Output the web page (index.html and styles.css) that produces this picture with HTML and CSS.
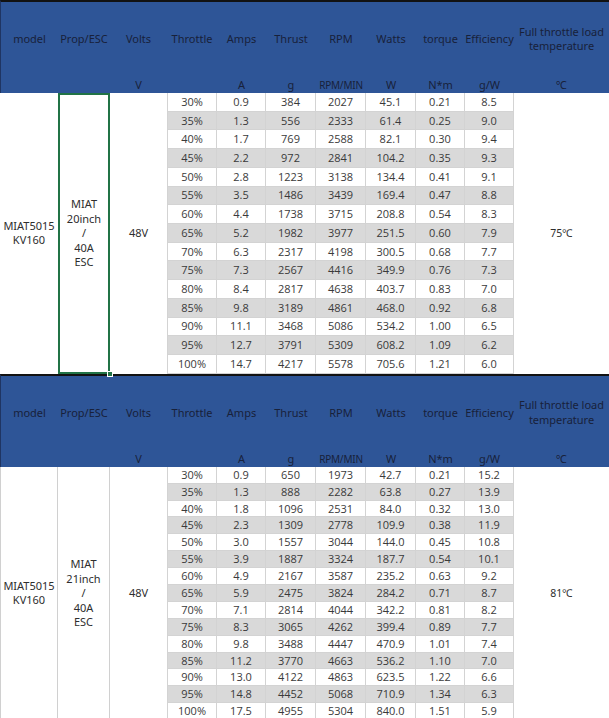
FILE: index.html
```html
<!DOCTYPE html>
<html>
<head>
<meta charset="utf-8">
<link rel="stylesheet" href="styles.css">
</head>
<body>
<div class="sheet">
<table class="perf t1">
  <colgroup>
    <col class="c-model"><col class="c-prop"><col class="c-volts"><col class="c-thr"><col class="c-amps"><col class="c-thrust"><col class="c-rpm"><col class="c-watts"><col class="c-torque"><col class="c-eff"><col class="c-temp">
  </colgroup>
  <thead>
    <tr class="labels">
      <th class="edge">model</th><th>Prop/ESC</th><th>Volts</th><th>Throttle</th><th>Amps</th><th>Thrust</th><th>RPM</th><th>Watts</th><th>torque</th><th>Efficiency</th><th>Full throttle load<br>temperature</th>
    </tr>
    <tr class="units">
      <th class="edge"></th><th></th><th>V</th><th></th><th>A</th><th>g</th><th class="small">RPM/MIN</th><th>W</th><th>N*m</th><th>g/W</th><th>℃</th>
    </tr>
  </thead>
  <tbody>
    <tr><td class="lc" rowspan="15">MIAT5015<br>KV160</td><td class="lc sel" rowspan="15">MIAT<br>20inch<br>/<br>40A<br>ESC<span class="handle"></span></td><td class="lc" rowspan="15">48V</td><td class="n first">30%</td><td class="n">0.9</td><td class="n">384</td><td class="n">2027</td><td class="n">45.1</td><td class="n">0.21</td><td class="n">8.5</td><td class="temp" rowspan="15">75℃</td></tr>
    <tr class="alt"><td class="n first">35%</td><td class="n">1.3</td><td class="n">556</td><td class="n">2333</td><td class="n">61.4</td><td class="n">0.25</td><td class="n">9.0</td></tr>
    <tr><td class="n first">40%</td><td class="n">1.7</td><td class="n">769</td><td class="n">2588</td><td class="n">82.1</td><td class="n">0.30</td><td class="n">9.4</td></tr>
    <tr class="alt"><td class="n first">45%</td><td class="n">2.2</td><td class="n">972</td><td class="n">2841</td><td class="n">104.2</td><td class="n">0.35</td><td class="n">9.3</td></tr>
    <tr><td class="n first">50%</td><td class="n">2.8</td><td class="n">1223</td><td class="n">3138</td><td class="n">134.4</td><td class="n">0.41</td><td class="n">9.1</td></tr>
    <tr class="alt"><td class="n first">55%</td><td class="n">3.5</td><td class="n">1486</td><td class="n">3439</td><td class="n">169.4</td><td class="n">0.47</td><td class="n">8.8</td></tr>
    <tr><td class="n first">60%</td><td class="n">4.4</td><td class="n">1738</td><td class="n">3715</td><td class="n">208.8</td><td class="n">0.54</td><td class="n">8.3</td></tr>
    <tr class="alt"><td class="n first">65%</td><td class="n">5.2</td><td class="n">1982</td><td class="n">3977</td><td class="n">251.5</td><td class="n">0.60</td><td class="n">7.9</td></tr>
    <tr><td class="n first">70%</td><td class="n">6.3</td><td class="n">2317</td><td class="n">4198</td><td class="n">300.5</td><td class="n">0.68</td><td class="n">7.7</td></tr>
    <tr class="alt"><td class="n first">75%</td><td class="n">7.3</td><td class="n">2567</td><td class="n">4416</td><td class="n">349.9</td><td class="n">0.76</td><td class="n">7.3</td></tr>
    <tr><td class="n first">80%</td><td class="n">8.4</td><td class="n">2817</td><td class="n">4638</td><td class="n">403.7</td><td class="n">0.83</td><td class="n">7.0</td></tr>
    <tr class="alt"><td class="n first">85%</td><td class="n">9.8</td><td class="n">3189</td><td class="n">4861</td><td class="n">468.0</td><td class="n">0.92</td><td class="n">6.8</td></tr>
    <tr><td class="n first">90%</td><td class="n">11.1</td><td class="n">3468</td><td class="n">5086</td><td class="n">534.2</td><td class="n">1.00</td><td class="n">6.5</td></tr>
    <tr class="alt"><td class="n first">95%</td><td class="n">12.7</td><td class="n">3791</td><td class="n">5309</td><td class="n">608.2</td><td class="n">1.09</td><td class="n">6.2</td></tr>
    <tr><td class="n first">100%</td><td class="n">14.7</td><td class="n">4217</td><td class="n">5578</td><td class="n">705.6</td><td class="n">1.21</td><td class="n">6.0</td></tr>
  </tbody>
</table>
<table class="perf t2">
  <colgroup>
    <col class="c-model"><col class="c-prop"><col class="c-volts"><col class="c-thr"><col class="c-amps"><col class="c-thrust"><col class="c-rpm"><col class="c-watts"><col class="c-torque"><col class="c-eff"><col class="c-temp">
  </colgroup>
  <thead>
    <tr class="labels">
      <th class="edge">model</th><th>Prop/ESC</th><th>Volts</th><th>Throttle</th><th>Amps</th><th>Thrust</th><th>RPM</th><th>Watts</th><th>torque</th><th>Efficiency</th><th>Full throttle load<br>temperature</th>
    </tr>
    <tr class="units">
      <th class="edge"></th><th></th><th>V</th><th></th><th>A</th><th>g</th><th class="small">RPM/MIN</th><th>W</th><th>N*m</th><th>g/W</th><th>℃</th>
    </tr>
  </thead>
  <tbody>
    <tr><td class="lc bl br" rowspan="15">MIAT5015<br>KV160</td><td class="lc br" rowspan="15">MIAT<br>21inch<br>/<br>40A<br>ESC</td><td class="lc" rowspan="15">48V</td><td class="n first">30%</td><td class="n">0.9</td><td class="n">650</td><td class="n">1973</td><td class="n">42.7</td><td class="n">0.21</td><td class="n">15.2</td><td class="temp" rowspan="15">81℃</td></tr>
    <tr class="alt"><td class="n first">35%</td><td class="n">1.3</td><td class="n">888</td><td class="n">2282</td><td class="n">63.8</td><td class="n">0.27</td><td class="n">13.9</td></tr>
    <tr><td class="n first">40%</td><td class="n">1.8</td><td class="n">1096</td><td class="n">2531</td><td class="n">84.0</td><td class="n">0.32</td><td class="n">13.0</td></tr>
    <tr class="alt"><td class="n first">45%</td><td class="n">2.3</td><td class="n">1309</td><td class="n">2778</td><td class="n">109.9</td><td class="n">0.38</td><td class="n">11.9</td></tr>
    <tr><td class="n first">50%</td><td class="n">3.0</td><td class="n">1557</td><td class="n">3044</td><td class="n">144.0</td><td class="n">0.45</td><td class="n">10.8</td></tr>
    <tr class="alt"><td class="n first">55%</td><td class="n">3.9</td><td class="n">1887</td><td class="n">3324</td><td class="n">187.7</td><td class="n">0.54</td><td class="n">10.1</td></tr>
    <tr><td class="n first">60%</td><td class="n">4.9</td><td class="n">2167</td><td class="n">3587</td><td class="n">235.2</td><td class="n">0.63</td><td class="n">9.2</td></tr>
    <tr class="alt"><td class="n first">65%</td><td class="n">5.9</td><td class="n">2475</td><td class="n">3824</td><td class="n">284.2</td><td class="n">0.71</td><td class="n">8.7</td></tr>
    <tr><td class="n first">70%</td><td class="n">7.1</td><td class="n">2814</td><td class="n">4044</td><td class="n">342.2</td><td class="n">0.81</td><td class="n">8.2</td></tr>
    <tr class="alt"><td class="n first">75%</td><td class="n">8.3</td><td class="n">3065</td><td class="n">4262</td><td class="n">399.4</td><td class="n">0.89</td><td class="n">7.7</td></tr>
    <tr><td class="n first">80%</td><td class="n">9.8</td><td class="n">3488</td><td class="n">4447</td><td class="n">470.9</td><td class="n">1.01</td><td class="n">7.4</td></tr>
    <tr class="alt"><td class="n first">85%</td><td class="n">11.2</td><td class="n">3770</td><td class="n">4663</td><td class="n">536.2</td><td class="n">1.10</td><td class="n">7.0</td></tr>
    <tr><td class="n first">90%</td><td class="n">13.0</td><td class="n">4122</td><td class="n">4863</td><td class="n">623.5</td><td class="n">1.22</td><td class="n">6.6</td></tr>
    <tr class="alt"><td class="n first">95%</td><td class="n">14.8</td><td class="n">4452</td><td class="n">5068</td><td class="n">710.9</td><td class="n">1.34</td><td class="n">6.3</td></tr>
    <tr><td class="n first">100%</td><td class="n">17.5</td><td class="n">4955</td><td class="n">5304</td><td class="n">840.0</td><td class="n">1.51</td><td class="n">5.9</td></tr>
  </tbody>
</table>
</div>
</body>
</html>
```
FILE: styles.css
```css
body {
  margin: 0;
  background: #ffffff;
}

.sheet {
  width: 609px;
  overflow: hidden;
}

.perf {
  width: 609px;
  table-layout: fixed;
  border-collapse: separate;
  border-spacing: 0;
  font-family: "Open Sans", "Noto Sans", sans-serif;
  font-size: 11px;
  color: #3a3a3a;
}

.c-model { width: 58px; }
.c-prop { width: 52px; }
.c-volts { width: 57px; }
.c-thr { width: 50px; }
.c-amps { width: 49px; }
.c-thrust { width: 50px; }
.c-rpm { width: 50px; }
.c-watts { width: 50px; }
.c-torque { width: 49px; }
.c-eff { width: 49px; }
.c-temp { width: 95px; }

.perf th {
  background: #2e5597;
  color: #18213a;
  font-family: "Noto Sans", "Noto Sans CJK SC", sans-serif;
  font-weight: normal;
  font-size: 11px;
  line-height: 14.5px;
  text-align: center;
  vertical-align: middle;
  padding: 0;
  white-space: nowrap;
}

.perf tr.labels th {
  height: 74px;
  border-top: 2px solid #121212;
}

.perf tr.units th {
  height: 16px;
  line-height: 14px;
  padding-top: 1px;
}

.perf th.edge {
  border-left: 1px solid #1f3563;
}

.perf th.small {
  font-size: 10px;
  letter-spacing: -0.2px;
}

.perf td {
  padding: 0;
  text-align: center;
  vertical-align: middle;
  white-space: nowrap;
}

.t1 tbody tr {
  height: 18.73px;
}

.t2 tbody tr {
  height: 16.9px;
}

.perf td.n {
  border-right: 1px solid #d3d3d3;
  border-bottom: 1px solid #d3d3d3;
  line-height: 14px;
}

.perf td.n.first {
  border-left: 1px solid #d3d3d3;
}

.perf tr.alt td.n {
  background: #d9d9d9;
}

.perf td.lc {
  font-family: "Noto Sans", "Noto Sans CJK SC", sans-serif;
  font-size: 11px;
  line-height: 14.5px;
  color: #2e2e2e;
}

.perf td.bl {
  border-left: 1px solid #d0d0d0;
}

.perf td.br {
  border-right: 1px solid #d0d0d0;
}

.perf td.sel {
  position: relative;
  box-shadow: inset 0 0 0 2px #217346;
}

.handle {
  position: absolute;
  right: -3px;
  bottom: -3px;
  width: 4px;
  height: 4px;
  background: #217346;
  border: 1px solid #ffffff;
}

.perf td.temp {
  font-family: "Noto Sans", "Noto Sans CJK SC", sans-serif;
  font-size: 10.5px;
  color: #2e2e2e;
}
```
